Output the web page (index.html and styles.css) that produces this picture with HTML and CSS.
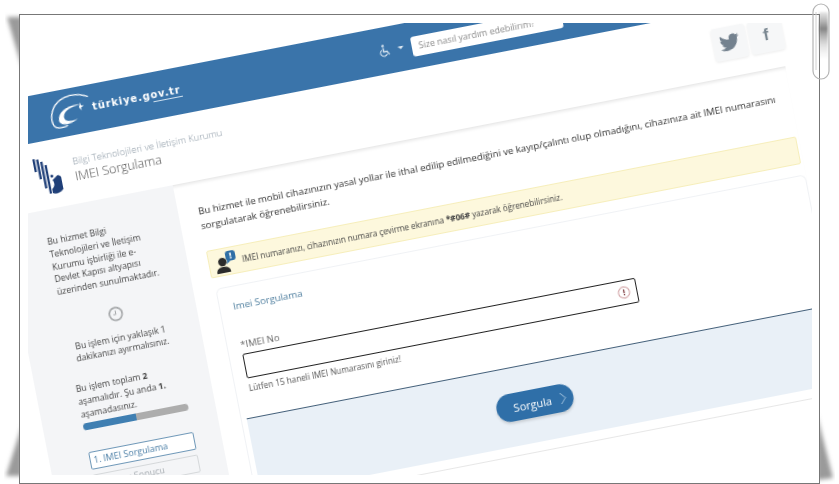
FILE: index.html
```html
<!DOCTYPE html>
<html lang="tr">
<head>
    <meta charset="UTF-8">
    <meta name="viewport" content="width=device-width, initial-scale=1.0">
    <title>IMEI Sorgulama</title>
    <link rel="stylesheet" href="styles.css">
</head>
<body>
    <div class="stage">
        <svg class="decor decor-back" width="839" height="484" viewBox="0 0 839 484">
            <defs>
                <filter id="soft"><feGaussianBlur stdDeviation="2"></feGaussianBlur></filter>
            </defs>
            <polygon filter="url(#soft)" fill="#9a9a9a" points="7,17 22,17 22,68"></polygon>
            <polygon filter="url(#soft)" fill="#9a9a9a" points="22,425 22,476 6,476"></polygon>
            <polygon filter="url(#soft)" fill="#9a9a9a" points="817,415 817,480 833,478"></polygon>
        </svg>

        <div class="frame">
            <div class="crop">
                <div class="sheet">
                    <div class="banner">
                        <svg class="gov-logo" width="42" height="42" viewBox="-21 -21 42 42">
                            <g transform="rotate(11)">
                                <path d="M18 -16C5 -20 -8 -17 -15 -7C-20 1 -19 12 -14 15C-10 16 -6 15 -2 13" fill="none" stroke="#fff" stroke-width="1.3"></path>
                                <path d="M10 -8C0 -8 -12 -2 -11 8C-10 14 0 13 8 6C0 10 -6 9 -6 4C-6 -2 2 -6 10 -8Z" fill="#fff"></path>
                                <path d="M10 -10L11 -7L14 -7L11 -5L12 -2L9 -5Z" fill="#fff"></path>
                            </g>
                        </svg>
                        <div class="gov-name">türkiye.gov.tr<span class="gov-rule"></span></div>
                        <svg class="access-icon" width="12" height="13" viewBox="0 0 12 13">
                            <circle cx="4.5" cy="1.5" r="1.3" fill="#d5e3ef"></circle>
                            <path d="M4.5 3.5V7.5H8L9.8 11" fill="none" stroke="#d5e3ef" stroke-width="1.4"></path>
                            <path d="M3 5.5A3.4 3.4 0 1 0 7.6 10" fill="none" stroke="#d5e3ef" stroke-width="1.1"></path>
                        </svg>
                        <span class="caret"></span>
                        <div class="search">Size nasıl yardım edebilirim?</div>
                    </div>

                    <div class="head">
                        <svg class="btk-logo" width="26" height="38" viewBox="0 0 26 38">
                            <rect x="1" y="0" width="2.3" height="13" fill="#1f3f78"></rect>
                            <rect x="4.6" y="1" width="2.3" height="20" fill="#1f3f78"></rect>
                            <rect x="8.2" y="4" width="2.3" height="27" fill="#1f3f78"></rect>
                            <rect x="11.8" y="8" width="2.3" height="29" fill="#1f3f78"></rect>
                            <path d="M23 20A9 9 0 0 1 15 37V33A6.5 6.5 0 0 0 17 24Z" fill="#1f3f78"></path>
                            <circle cx="17" cy="20" r="1.5" fill="#1f3f78"></circle>
                        </svg>
                        <div class="titles">
                            <div class="org">Bilgi Teknolojileri ve İletişim Kurumu</div>
                            <div class="page-title">IMEI Sorgulama</div>
                        </div>
                        <div class="socials">
                            <div class="tile">
                                <svg width="20" height="20" viewBox="0 0 24 24"><path fill="#74828f" d="M23.953 4.57a10 10 0 01-2.825.775 4.958 4.958 0 002.163-2.723c-.951.555-2.005.959-3.127 1.184a4.92 4.92 0 00-8.384 4.482C7.69 8.095 4.067 6.13 1.64 3.162a4.822 4.822 0 00-.666 2.475c0 1.71.87 3.213 2.188 4.096a4.904 4.904 0 01-2.228-.616v.06a4.923 4.923 0 003.946 4.827 4.996 4.996 0 01-2.212.085 4.936 4.936 0 004.604 3.417 9.867 9.867 0 01-6.102 2.105c-.39 0-.779-.023-1.17-.067a13.995 13.995 0 007.557 2.209c9.053 0 13.998-7.496 13.998-13.985 0-.21 0-.42-.015-.63A9.935 9.935 0 0024 4.59z"></path></svg>
                            </div>
                            <div class="tile tile-fb">f</div>
                        </div>
                    </div>

                    <div class="columns">
                        <aside class="side">
                            <p class="side-intro">Bu hizmet Bilgi<br>Teknolojileri ve İletişim<br>Kurumu işbirliği ile e-<br>Devlet Kapısı altyapısı<br>üzerinden sunulmaktadır.</p>
                            <div class="clock">
                                <svg width="15" height="15" viewBox="0 0 15 15">
                                    <circle cx="7.5" cy="7.5" r="6.4" fill="none" stroke="#a6a8aa" stroke-width="1.7"></circle>
                                    <path d="M7.5 4V8H5" fill="none" stroke="#a6a8aa" stroke-width="1"></path>
                                </svg>
                            </div>
                            <p class="side-time">Bu işlem için yaklaşık 1<br>dakikanızı ayırmalısınız.</p>
                            <p class="side-steps">Bu işlem toplam <b>2</b><br>aşamalıdır. Şu anda <b>1.</b><br>aşamadasınız.</p>
                            <div class="progress"><div class="progress-fill"></div></div>
                            <div class="step step-active">1. IMEI Sorgulama</div>
                            <div class="step">2. Sorgu Sonucu</div>
                        </aside>

                        <main class="content">
                            <p class="lead">Bu hizmet ile mobil cihazınızın yasal yollar ile ithal edilip edilmediğini ve kayıp/çalıntı olup olmadığını, cihazınıza ait IMEI numarasını<br>sorgulatarak öğrenebilirsiniz.</p>
                            <div class="alert">
                                <svg class="alert-icon" width="24" height="23" viewBox="0 0 24 23">
                                    <circle cx="8" cy="11" r="4.2" fill="#2b2b2b"></circle>
                                    <path d="M1 22C1 17 4 16 8 16S15 17 15 22Z" fill="#2b2b2b"></path>
                                    <rect x="12" y="1" width="10" height="10" rx="3" fill="#2f6fa6"></rect>
                                    <path d="M13 10L12 14L16 11Z" fill="#2f6fa6"></path>
                                    <rect x="16.3" y="3" width="1.6" height="3.6" fill="#fff"></rect>
                                    <rect x="16.3" y="7.4" width="1.6" height="1.6" fill="#fff"></rect>
                                </svg>
                                <span>IMEI numaranızı, cihazınızın numara çevirme ekranına <b>*#06#</b> yazarak öğrenebilirsiniz.</span>
                            </div>
                            <div class="card">
                                <div class="form">
                                    <h2 class="form-title">Imei Sorgulama</h2>
                                    <label class="field-label">*IMEI No</label>
                                    <div class="field">
                                        <svg width="13" height="13" viewBox="0 0 13 13">
                                            <circle cx="6.5" cy="6.5" r="5.6" fill="none" stroke="#d3a6a8" stroke-width="1.1"></circle>
                                            <rect x="5.9" y="3.4" width="1.3" height="3.8" fill="#7d3a3e"></rect>
                                            <rect x="5.9" y="8" width="1.3" height="1.3" fill="#7d3a3e"></rect>
                                        </svg>
                                    </div>
                                    <div class="hint">Lütfen 15 haneli IMEI Numarasını giriniz!</div>
                                </div>
                                <div class="actions">
                                    <button type="button" class="btn">Sorgula
                                        <svg width="7" height="13" viewBox="0 0 7 13"><path d="M1 1L6 6.5L1 12" fill="none" stroke="#a9c8e2" stroke-width="1"></path></svg>
                                    </button>
                                </div>
                            </div>
                        </main>
                    </div>
                </div>
            </div>
        </div>

        <svg class="decor decor-clip" width="839" height="484" viewBox="0 0 839 484">
            <defs>
                <linearGradient id="clipShade" x1="0" y1="0" x2="0" y2="1">
                    <stop offset="0" stop-color="#8a8a8a" stop-opacity="0.2"></stop>
                    <stop offset="0.35" stop-color="#777" stop-opacity="0.9"></stop>
                    <stop offset="0.7" stop-color="#aaa" stop-opacity="0.35"></stop>
                    <stop offset="1" stop-color="#ccc" stop-opacity="0"></stop>
                </linearGradient>
                <filter id="softClip"><feGaussianBlur stdDeviation="1"></feGaussianBlur></filter>
            </defs>
            <rect x="819" y="12" width="9" height="48" fill="url(#clipShade)" filter="url(#softClip)"></rect>
            <rect x="813" y="4" width="16" height="75" rx="8" fill="none" stroke="#b5b5b5" stroke-width="1.2"></rect>
            <path d="M816 12V70" fill="none" stroke="#d0d0d0" stroke-width="1"></path>
        </svg>
    </div>
</body>
</html>
```

FILE: styles.css
```css
body, html {
    margin: 0;
    padding: 0;
    background-color: #fff;
    font-family: "Open Sans", Arial, sans-serif;
}
p {
    margin: 0;
}
.stage {
    position: relative;
    width: 839px;
    height: 484px;
    overflow: hidden;
}
.decor {
    position: absolute;
    left: 0;
    top: 0;
    pointer-events: none;
}
.frame {
    position: relative;
    box-sizing: border-box;
    width: 801px;
    height: 470px;
    margin: 14px 0 0 19px;
    padding: 8px 7px 8px 8px;
    background: #fff;
    border: 1px solid #777;
}
.crop {
    height: 100%;
    overflow: hidden;
}
/* the whole page is photographed tilted */
.sheet {
    width: 798px;
    transform-origin: 0 0;
    transform: translate(-48px, 82.5px) rotate(-11deg);
    filter: blur(0.35px);
}
.banner {
    display: flex;
    align-items: center;
    height: 47px;
    padding-left: 66px;
    background-color: #3a74aa;
}
.gov-logo {
    flex: none;
}
.gov-name {
    position: relative;
    margin-left: 2px;
    width: 91px;
    padding-bottom: 2px;
    color: #fff;
    font-family: "DejaVu Sans", sans-serif;
    font-size: 10px;
    font-weight: bold;
    letter-spacing: 0.9px;
    white-space: nowrap;
}
.gov-rule {
    position: absolute;
    right: 0;
    bottom: 0;
    width: 30px;
    height: 1px;
    background: #cfe0ee;
}
.access-icon {
    margin-left: 201px;
}
.caret {
    margin-left: 7px;
    border-left: 3px solid transparent;
    border-right: 3px solid transparent;
    border-top: 3px solid #dfe9f2;
}
.search {
    box-sizing: border-box;
    width: 153px;
    height: 20px;
    margin-left: 8px;
    margin-top: 2px;
    padding-left: 7px;
    background: #fff;
    border-radius: 3px;
    color: #8b8b8b;
    font-size: 9px;
    line-height: 20px;
    white-space: nowrap;
    overflow: hidden;
}
.head {
    display: flex;
    align-items: center;
    height: 68px;
    padding-left: 40px;
}
.btk-logo {
    margin-top: 2px;
}
.titles {
    margin-left: 14px;
}
.org {
    color: #8d9aa6;
    font-size: 9.5px;
    font-weight: 300;
    line-height: 13px;
}
.page-title {
    color: #555;
    font-size: 12.8px;
    font-weight: 300;
    letter-spacing: -0.1px;
    line-height: 17px;
}
.socials {
    display: flex;
    gap: 3px;
    margin-left: auto;
    margin-right: -4px;
}
.tile {
    display: flex;
    align-items: center;
    justify-content: center;
    width: 34px;
    height: 33px;
    background: #f6f7f8;
    border-radius: 3px;
    box-shadow: 0 1px 3px rgba(0, 0, 0, 0.08);
}
.tile-fb {
    color: #7a8791;
    font-family: "Liberation Sans", sans-serif;
    font-size: 17px;
    font-weight: bold;
}
.columns {
    display: flex;
    box-shadow: inset 0 4px 4px -3px rgba(0, 0, 0, 0.14);
}
.side {
    flex: none;
    box-sizing: border-box;
    width: 174px;
    height: 420px;
    padding: 26px 27px 0 40px;
    background: #f4f5f7;
    color: #444;
    font-size: 8.7px;
}
.side-intro {
    line-height: 12.75px;
    white-space: nowrap;
}
.clock {
    height: 15px;
    margin-top: 18px;
    text-align: center;
}
.side-time {
    margin-top: 11px;
    line-height: 12.5px;
    text-align: center;
    white-space: nowrap;
}
.side-steps {
    margin-top: 17px;
    line-height: 13px;
    white-space: nowrap;
}
.progress {
    height: 7px;
    margin-top: 2px;
    background: #adadad;
    border-radius: 4px;
    overflow: hidden;
}
.progress-fill {
    width: 50%;
    height: 100%;
    background: #3f7fb2;
}
.step {
    box-sizing: border-box;
    height: 18px;
    margin-top: 5px;
    padding-left: 3px;
    border: 1px solid #d5d8da;
    border-radius: 2px;
    color: #a8aeb3;
    font-size: 9px;
    line-height: 15px;
    white-space: nowrap;
}
.step-active {
    margin-top: 22px;
    background: #fff;
    border-color: #6f98b8;
    color: #4a7ea6;
}
.content {
    flex: 1;
    min-width: 0;
    padding: 23px 0 0 20px;
}
.lead {
    color: #333;
    font-size: 9.7px;
    line-height: 15px;
    white-space: nowrap;
}
.alert {
    display: flex;
    align-items: center;
    box-sizing: border-box;
    height: 28px;
    margin: 18px 3px 0 0;
    padding-left: 5px;
    background: #fdf8dd;
    border: 1px solid #f6eebb;
    border-radius: 2px;
    color: #444;
    font-size: 8.2px;
    white-space: nowrap;
}
.alert-icon {
    margin-right: 4px;
}
.card {
    margin: 11px 1px 0 2px;
    background: #fff;
    border: 1px solid #f0f2f5;
    border-bottom-color: #e7e7e7;
    border-radius: 6px;
    padding-bottom: 9px;
}
.form {
    padding: 13px 13px 0;
}
.form-title {
    margin: 0;
    color: #4f7f9f;
    font-size: 9.7px;
    font-weight: 400;
    line-height: 14px;
}
.field-label {
    display: block;
    margin-top: 26px;
    color: #666;
    font-size: 9.5px;
    line-height: 12px;
}
.field {
    display: flex;
    align-items: center;
    justify-content: flex-end;
    box-sizing: border-box;
    width: 400px;
    height: 25px;
    margin-top: 3px;
    padding-right: 6px;
    border: 1.5px solid #222;
    border-radius: 2px;
}
.hint {
    margin-top: 4px;
    color: #555;
    font-size: 8.25px;
    line-height: 12px;
}
.actions {
    display: flex;
    align-items: center;
    height: 78px;
    margin: 23px 0 0 5px;
    padding-left: 247px;
    background: #e9f0f7;
    border-top: 1px solid #44607a;
}
.btn {
    display: flex;
    align-items: center;
    justify-content: center;
    gap: 8px;
    box-sizing: border-box;
    width: 78px;
    height: 28px;
    padding: 0 0 0 10px;
    background-color: #2f6fa8;
    border: none;
    border-radius: 14px;
    box-shadow: 0 2px 3px rgba(0, 0, 0, 0.15);
    color: white;
    font-family: "Open Sans", Arial, sans-serif;
    font-size: 11px;
}
```
